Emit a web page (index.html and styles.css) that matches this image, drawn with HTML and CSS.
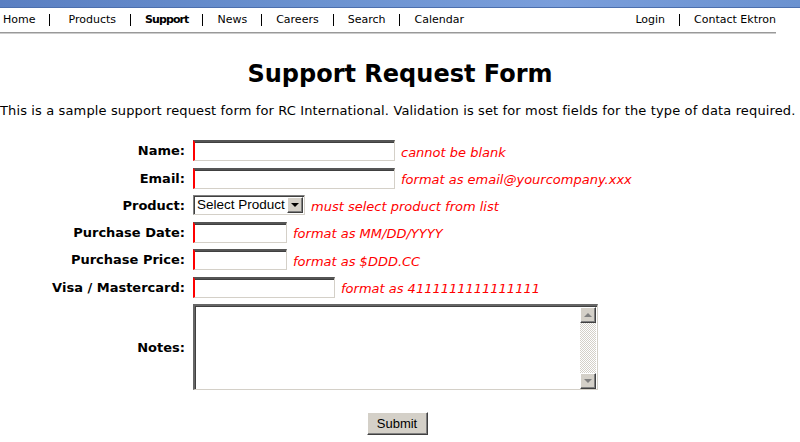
FILE: index.html
```html
<!DOCTYPE html>
<html lang="en">
<head>
    <meta charset="UTF-8">
    <title>Support Request Form</title>
    <link rel="stylesheet" href="styles.css">
</head>
<body>
    <div class="topbar"></div>
    <nav class="navbar">
        <div class="nav-links">
            <a href="#">Home</a>
            <a href="#" class="after-home">Products</a>
            <a href="#" class="current">Support</a>
            <a href="#">News</a>
            <a href="#">Careers</a>
            <a href="#">Search</a>
            <a href="#">Calendar</a>
        </div>
        <div class="nav-links">
            <a href="#">Login</a>
            <a href="#">Contact Ektron</a>
        </div>
    </nav>

    <h1 class="title">Support Request Form</h1>
    <p class="intro">This is a sample support request form for RC International. Validation is set for most fields for the type of data required.</p>

    <form class="request-form">
        <label class="field-label" for="name">Name:</label>
        <div class="field">
            <input type="text" id="name" class="text-input wide">
            <span class="hint">cannot be blank</span>
        </div>

        <label class="field-label" for="email">Email:</label>
        <div class="field">
            <input type="text" id="email" class="text-input wide">
            <span class="hint">format as email@yourcompany.xxx</span>
        </div>

        <label class="field-label" for="product">Product:</label>
        <div class="field">
            <span class="select-box">
                <select id="product"><option>Select Product</option></select>
                <span class="select-arrow"><span class="tri-down"></span></span>
            </span>
            <span class="hint">must select product from list</span>
        </div>

        <label class="field-label" for="pdate">Purchase Date:</label>
        <div class="field">
            <input type="text" id="pdate" class="text-input short">
            <span class="hint">format as MM/DD/YYYY</span>
        </div>

        <label class="field-label" for="price">Purchase Price:</label>
        <div class="field">
            <input type="text" id="price" class="text-input short">
            <span class="hint">format as $DDD.CC</span>
        </div>

        <label class="field-label" for="card">Visa / Mastercard:</label>
        <div class="field">
            <input type="text" id="card" class="text-input medium">
            <span class="hint">format as 4111111111111111</span>
        </div>

        <label class="field-label" for="notes">Notes:</label>
        <div class="field">
            <div class="notes-box">
                <textarea id="notes"></textarea>
                <div class="scrollbar">
                    <span class="scroll-btn"><span class="tri-up"></span></span>
                    <span class="scroll-track"></span>
                    <span class="scroll-btn"><span class="tri-down"></span></span>
                </div>
            </div>
        </div>
    </form>

    <div class="actions">
        <button type="button" class="submit-btn">Submit</button>
    </div>
</body>
</html>
```

FILE: styles.css
```css
* {
    margin: 0;
    padding: 0;
    box-sizing: border-box;
}

body {
    background-color: white;
    font-family: 'DejaVu Sans', Verdana, sans-serif;
    font-size: 13px;
    color: black;
    width: 800px;
}

.topbar {
    height: 8px;
    background: linear-gradient(90deg, #5a7fc2 0%, #6b92d0 40%, #7a9edb 70%, #6b92d0 100%);
    border-bottom: 1px solid #4c6fae;
}

.navbar {
    width: 776px;
    height: 25px;
    display: flex;
    justify-content: space-between;
    align-items: center;
    padding-left: 3px;
    border-bottom: 1px solid #999;
    box-shadow: 0 1px 0 #ccc;
}

.nav-links {
    display: flex;
    align-items: center;
}

.nav-links a {
    color: black;
    text-decoration: none;
    font-size: 11px;
    line-height: 12px;
    padding: 0 14px;
    border-left: 1px solid black;
}

.nav-links a:first-child {
    border-left: none;
    padding-left: 0;
}

.nav-links a:last-child {
    padding-right: 0;
}

.nav-links a.after-home {
    padding-left: 18px;
}

.nav-links a.current {
    font-weight: bold;
    letter-spacing: -0.9px;
}

.title {
    text-align: center;
    font-size: 24px;
    font-weight: bold;
    margin-top: 28px;
    line-height: 26px;
}

.intro {
    margin-top: 16px;
    line-height: 16px;
    letter-spacing: 0.13px;
    white-space: nowrap;
}

.request-form {
    display: grid;
    grid-template-columns: 185px auto;
    column-gap: 8px;
    row-gap: 6.5px;
    margin-top: 21px;
}

.field-label {
    justify-self: end;
    align-self: center;
    font-weight: bold;
}

.field {
    display: flex;
    align-items: center;
    gap: 6px;
}

.text-input {
    height: 21px;
    border-style: solid;
    border-width: 2px 1px 1px 2px;
    border-color: #555 #d4d0c8 #d4d0c8 red;
    box-shadow: inset 0 1px 0 #404040;
    outline: none;
    font-family: 'Liberation Sans', Arial, sans-serif;
    font-size: 13px;
}

.text-input.wide { width: 202px; }
.text-input.short { width: 94px; }
.text-input.medium { width: 142px; }

.hint {
    color: red;
    font-style: italic;
    padding-top: 3px;
}

.select-box {
    display: flex;
    align-items: center;
    height: 20px;
    width: 112px;
    border-style: solid;
    border-width: 1px;
    border-color: #808080 #d4d0c8 #d4d0c8 #808080;
    box-shadow: inset 1px 1px 0 #404040;
    padding: 1px;
}

.select-box select {
    appearance: none;
    border: none;
    background: white;
    font-family: 'Liberation Sans', Arial, sans-serif;
    font-size: 13.5px;
    padding-left: 2px;
    flex: 1;
    height: 16px;
    line-height: 16px;
    outline: none;
}

.select-arrow,
.scroll-btn {
    width: 16px;
    height: 16px;
    background-color: #d4d0c8;
    border-style: solid;
    border-width: 1px;
    border-color: #fff #404040 #404040 #fff;
    box-shadow: inset -1px -1px 0 #808080;
    display: flex;
    align-items: center;
    justify-content: center;
}

.tri-down {
    width: 0;
    height: 0;
    border-left: 4px solid transparent;
    border-right: 4px solid transparent;
    border-top: 4px solid black;
}

.tri-up {
    width: 0;
    height: 0;
    border-left: 4px solid transparent;
    border-right: 4px solid transparent;
    border-bottom: 4px solid #808080;
}

.scroll-btn .tri-down {
    border-top-color: #808080;
}

.notes-box {
    display: flex;
    width: 405px;
    height: 86px;
    border-style: solid;
    border-width: 2px 1px 1px 2px;
    border-color: #666 #d4d0c8 #d4d0c8 #666;
    box-shadow: inset 1px 1px 0 #404040;
    padding: 1px 1px 0 1px;
}

.notes-box textarea {
    flex: 1;
    border: none;
    resize: none;
    outline: none;
    overflow: hidden;
    font-family: 'Liberation Mono', monospace;
    font-size: 13px;
}

.scrollbar {
    width: 16px;
    display: flex;
    flex-direction: column;
}

.scroll-track {
    flex: 1;
    background-image: repeating-conic-gradient(#d4d0c8 0 25%, #fff 0 50%);
    background-size: 2px 2px;
}

.actions {
    display: flex;
    justify-content: center;
    padding-right: 6px;
    margin-top: 22px;
}

.submit-btn {
    width: 61px;
    height: 23px;
    background-color: #d4d0c8;
    font-family: 'Liberation Sans', Arial, sans-serif;
    font-size: 13px;
    border-style: solid;
    border-width: 1px;
    border-color: #fff #404040 #404040 #fff;
    box-shadow: inset -1px -1px 0 #808080;
}
```
